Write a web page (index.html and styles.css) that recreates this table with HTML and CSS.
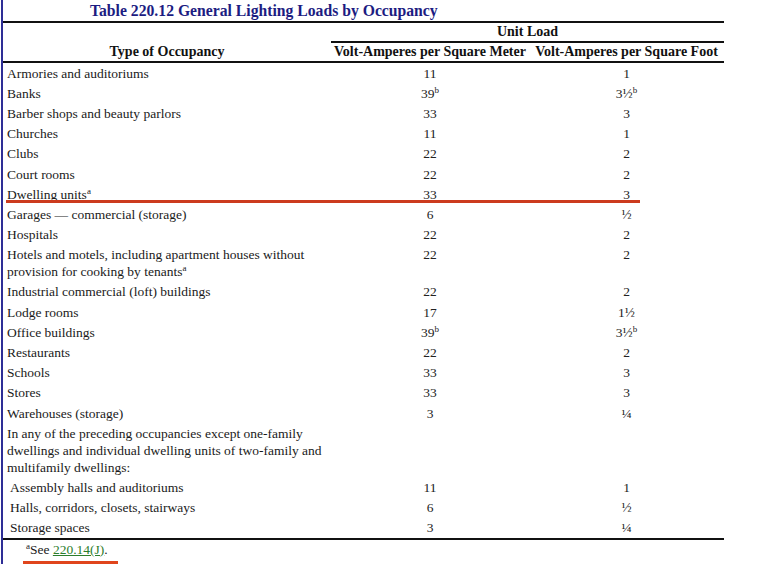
FILE: index.html
```html
<!DOCTYPE html>
<html lang="en">
<head>
<meta charset="utf-8">
<title>Table 220.12 General Lighting Loads by Occupancy</title>
<link rel="stylesheet" href="styles.css">
</head>
<body>
<div class="page">
  <h1 class="title">Table 220.12 General Lighting Loads by Occupancy</h1>
  <table class="loads">
    <colgroup>
      <col class="c-type">
      <col class="c-meter">
      <col class="c-foot">
    </colgroup>
    <thead>
      <tr class="h1">
        <th rowspan="2" class="type-head">Type of Occupancy</th>
        <th colspan="2" class="unit">Unit Load</th>
      </tr>
      <tr class="h2">
        <th>Volt-Amperes per Square Meter</th>
        <th>Volt-Amperes per Square Foot</th>
      </tr>
    </thead>
    <tbody>
      <tr><td>Armories and auditoriums</td><td class="n">11</td><td class="n">1</td></tr>
      <tr><td>Banks</td><td class="n">39<sup>b</sup></td><td class="n">3½<sup>b</sup></td></tr>
      <tr><td>Barber shops and beauty parlors</td><td class="n">33</td><td class="n">3</td></tr>
      <tr><td>Churches</td><td class="n">11</td><td class="n">1</td></tr>
      <tr><td>Clubs</td><td class="n">22</td><td class="n">2</td></tr>
      <tr><td>Court rooms</td><td class="n">22</td><td class="n">2</td></tr>
      <tr><td>Dwelling units<sup>a</sup></td><td class="n">33</td><td class="n">3</td></tr>
      <tr><td>Garages — commercial (storage)</td><td class="n">6</td><td class="n">½</td></tr>
      <tr><td>Hospitals</td><td class="n">22</td><td class="n">2</td></tr>
      <tr><td>Hotels and motels, including apartment houses without<br>provision for cooking by tenants<sup>a</sup></td><td class="n">22</td><td class="n">2</td></tr>
      <tr><td>Industrial commercial (loft) buildings</td><td class="n">22</td><td class="n">2</td></tr>
      <tr><td>Lodge rooms</td><td class="n">17</td><td class="n">1½</td></tr>
      <tr><td>Office buildings</td><td class="n">39<sup>b</sup></td><td class="n">3½<sup>b</sup></td></tr>
      <tr><td>Restaurants</td><td class="n">22</td><td class="n">2</td></tr>
      <tr><td>Schools</td><td class="n">33</td><td class="n">3</td></tr>
      <tr><td>Stores</td><td class="n">33</td><td class="n">3</td></tr>
      <tr><td>Warehouses (storage)</td><td class="n">3</td><td class="n">¼</td></tr>
      <tr><td>In any of the preceding occupancies except one-family<br>dwellings and individual dwelling units of two-family and<br>multifamily dwellings:</td><td class="n"></td><td class="n"></td></tr>
      <tr><td class="sub">Assembly halls and auditoriums</td><td class="n">11</td><td class="n">1</td></tr>
      <tr><td class="sub">Halls, corridors, closets, stairways</td><td class="n">6</td><td class="n">½</td></tr>
      <tr><td class="sub">Storage spaces</td><td class="n">3</td><td class="n">¼</td></tr>
    </tbody>
  </table>
  <p class="note"><sup>a</sup>See <a href="#" class="ref">220.14(J)</a>.</p>
  <div class="mark-bar"></div>
  <div class="mark-line"></div>
</div>
</body>
</html>
```
FILE: styles.css
```css
html, body {
  margin: 0;
  padding: 0;
  background: #ffffff;
}

body {
  font-family: "Liberation Serif", "Times New Roman", serif;
  font-size: 13.5px;
  color: #1a1a1a;
  overflow: hidden;
}

.page {
  position: relative;
  margin-left: 1px;
  border-left: 2px solid #2e2e96;
  height: 564px;
  box-sizing: border-box;
}

.title {
  margin: 0;
  padding: 1px 0 0 87px;
  font-size: 15.7px;
  line-height: 20px;
  font-weight: bold;
  color: #1c1c82;
  height: 20px;
}

.loads {
  border-collapse: collapse;
  width: 721px;
  table-layout: fixed;
  border-top: 2px solid #111;
  border-bottom: 2px solid #111;
}

.c-type { width: 328px; }
.c-meter { width: 198px; }
.c-foot { width: 195px; }

.loads th {
  font-weight: bold;
  font-size: 14px;
  line-height: 16px;
  padding: 1px 0;
  text-align: center;
  color: #111;
  white-space: nowrap;
}

.loads .h1 th { height: 16px; }
.loads .unit { border-bottom: 2px solid #111; }
.loads .h2 th { border-bottom: 2px solid #111; }
.loads .type-head { vertical-align: bottom; border-bottom: 2px solid #111; }

.loads td {
  padding: 1.6px 0 1.6px 4px;
  line-height: 17px;
  vertical-align: top;
  white-space: nowrap;
}

.loads td.n {
  text-align: center;
  padding-left: 0;
  color: #222;
}

.loads td.sub { padding-left: 7px; }

sup {
  font-size: 9px;
  line-height: 0;
  vertical-align: 5px;
}

.note {
  margin: 0;
  padding: 1px 0 0 23px;
  line-height: 17px;
}

.ref {
  color: #2c7d2c;
  text-decoration: underline;
}

.mark-bar {
  margin: 3px 0 0 20px;
  width: 95px;
  height: 8px;
  background: #e0451c;
}

.mark-line {
  position: absolute;
  left: 3px;
  top: 200px;
  width: 634px;
  height: 3px;
  background: #cc3b1e;
}
```
